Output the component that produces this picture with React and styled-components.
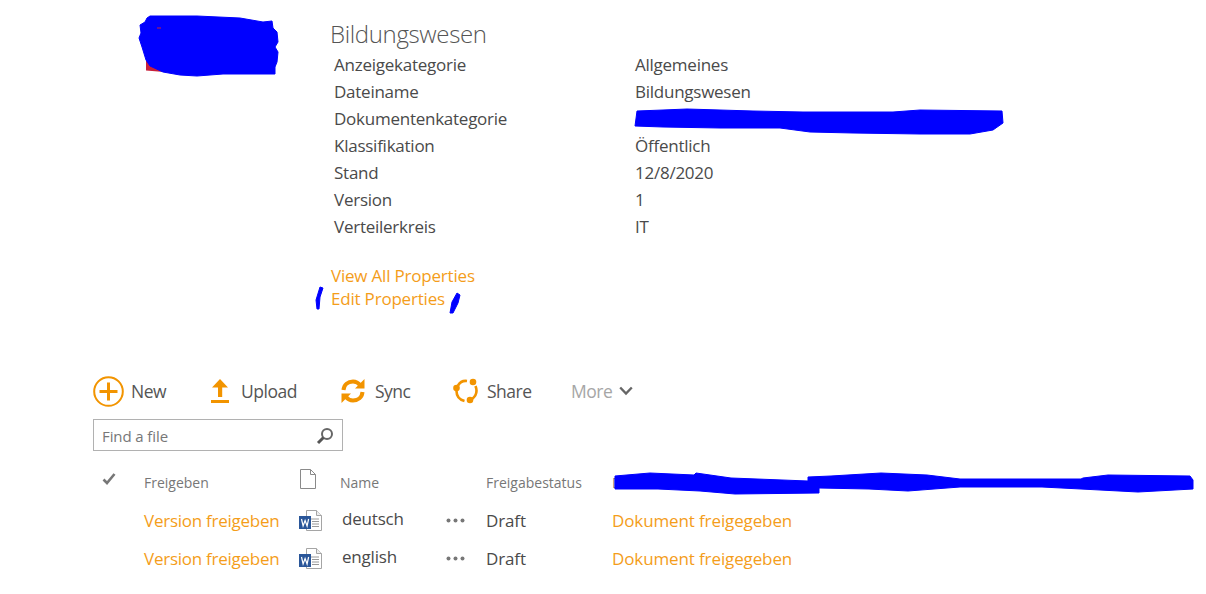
import React from "react";
import styled, { createGlobalStyle } from "styled-components";

const Global = createGlobalStyle`
  html, body { margin: 0; padding: 0; background: #fff; }
  body { font-family: "Open Sans", "Noto Sans", sans-serif; color: #4a4a4a; }
`;

const ORANGE = "#f49d1a";
const ICON = "#f29400";

const Page = styled.div`
  position: relative;
  width: 1206px;
  height: 594px;
  overflow: hidden;
  background: #fff;
`;

const Details = styled.section`
  display: flex;
  flex-direction: column;
  padding: 18px 0 0 331px;
`;
const Title = styled.h1`
  margin: 0 0 0 -1px;
  font-size: 24px;
  font-weight: 300;
  line-height: 32px;
  color: #555;
  letter-spacing: -0.35px;
`;
const PropList = styled.dl`
  margin: 1px 0 0 3px;
  display: grid;
  grid-template-columns: 301px 1fr;
  grid-auto-rows: 27px;
  align-items: center;
  font-size: 17px;
  letter-spacing: -0.25px;
`;
const PropName = styled.dt`
  color: #4a4a4a;
`;
const PropValue = styled.dd`
  margin: 0;
  color: #4a4a4a;
`;
const Links = styled.div`
  margin-top: 24px;
  display: flex;
  flex-direction: column;
  font-size: 17px;
  line-height: 23px;
  letter-spacing: -0.2px;
`;
const PropLink = styled.a`
  color: ${ORANGE};
`;

const Toolbar = styled.div`
  display: flex;
  align-items: center;
  height: 32px;
  margin: 65px 0 0 93px;
`;
const Action = styled.div`
  display: flex;
  align-items: center;
  width: ${(p) => p.$w}px;
  gap: ${(p) => p.$gap}px;
  font-size: 17.5px;
  letter-spacing: -0.5px;
  color: ${(p) => (p.$muted ? "#a6a6a6" : "#555")};
`;
const Search = styled.div`
  display: flex;
  align-items: center;
  justify-content: space-between;
  box-sizing: border-box;
  width: 250px;
  height: 32px;
  margin: 12px 0 0 93px;
  padding: 1px 8px 0;
  border: 1px solid #b1b1b1;
  font-size: 15px;
  letter-spacing: -0.1px;
  color: #777;
`;

const Table = styled.div`
  display: grid;
  grid-template-columns: 51px 156px 40px 146px 126px 1fr;
  margin: 12px 0 0 93px;
`;
const Head = styled.div`
  display: flex;
  align-items: center;
  height: 38px;
  font-size: 14px;
  color: #777;
`;
const CheckSlot = styled.span`
  display: flex;
  margin: -6px 0 0 9px;
`;
const FileSlot = styled.span`
  display: flex;
  margin-top: -6px;
`;
const Cell = styled.div`
  display: flex;
  align-items: center;
  height: 38px;
  font-size: 17px;
  letter-spacing: ${(p) => p.$ls ?? "-0.12px"};
  color: ${(p) => (p.$link ? ORANGE : "#4a4a4a")};
`;
const IconCell = styled(Cell)`
  margin-left: -1px;
`;
const NameCell = styled(Cell)`
  justify-content: space-between;
  padding: 0 21px 0 2px;
  letter-spacing: -0.2px;
`;
const NameText = styled.span`
  margin-top: -3px;
`;

const Redaction = styled.svg`
  position: absolute;
  left: 0;
  top: 0;
  pointer-events: none;
`;

const PlusIcon = () => (
  <svg width="31" height="31" viewBox="0 0 31 31" fill="none" stroke={ICON}>
    <circle cx="15.5" cy="15.5" r="14.3" strokeWidth="2" />
    <path d="M15.5 6.5v18M6.5 15.5h18" strokeWidth="3" />
  </svg>
);
const UploadIcon = () => (
  <svg width="20" height="24" viewBox="0 0 20 24" fill={ICON}>
    <path d="M10 0l8 8.5h-5.8V18H8V8.5H2z" />
    <rect x="1" y="21" width="18" height="3" />
  </svg>
);
const SyncIcon = () => (
  <svg width="24" height="26" viewBox="0 0 24 26" fill="none" stroke={ICON} strokeWidth="4">
    <path d="M2.5 12C3 6.5 7 3.5 12 3.5c3.5 0 5.5 1.5 7.5 4" />
    <path d="M21.5 14C21 19.5 17 22.5 12 22.5c-3.5 0-5.5-1.5-7.5-4" />
    <path d="M23.5 1v9.5h-9.5z" fill={ICON} stroke="none" />
    <path d="M.5 25v-9.5h9.5z" fill={ICON} stroke="none" />
  </svg>
);
const ShareIcon = () => (
  <svg width="26" height="26" viewBox="0 0 26 26" fill="none" stroke={ICON} strokeWidth="2.6">
    <path d="M5 7.5C7 4 10 2.5 14 3" />
    <path d="M22.5 8c2 5 1 9.5-3.5 13" />
    <path d="M3.5 13c0 5 2.5 8.5 8 10" />
    <circle cx="20" cy="4" r="3.3" fill={ICON} stroke="none" />
    <circle cx="3.5" cy="10" r="3.3" fill={ICON} stroke="none" />
    <circle cx="17" cy="22" r="3.3" fill={ICON} stroke="none" />
  </svg>
);
const Chevron = () => (
  <svg width="14" height="10" viewBox="0 0 14 10" fill="none" stroke="#666" strokeWidth="2.4">
    <path d="M1.2 1.5L7 7.5l5.8-6" />
  </svg>
);
const SearchIcon = () => (
  <svg width="18" height="18" viewBox="0 0 18 18" fill="none">
    <circle cx="11" cy="7" r="5" stroke="#666" strokeWidth="2" />
    <path d="M7.5 10.5L2 16" stroke="#555" strokeWidth="3" />
  </svg>
);
const CheckIcon = () => (
  <svg width="14" height="12" viewBox="0 0 14 12" fill="none" stroke="#777" strokeWidth="2.6">
    <path d="M1.5 6.5l3.5 3.5 7.5-9" />
  </svg>
);
const FileIcon = () => (
  <svg width="16" height="20" viewBox="0 0 16 20" fill="#fff" stroke="#8a8a8a" strokeWidth="1">
    <path d="M.5.5h10l5 5v14h-15z" />
    <path d="M10.5.5v5h5" fill="none" />
  </svg>
);
const WordIcon = () => (
  <svg width="23" height="21" viewBox="0 0 23 21">
    <path d="M7.5.5h10l5 5v15h-15z" fill="#fff" stroke="#a5a5a5" />
    <path d="M17.5.5v5h5" fill="#eee" stroke="#a5a5a5" />
    <path d="M11 9h9M13 11.5h7M13 14h7M13 16.5h7" stroke="#9a9a9a" />
    <rect x="0" y="6" width="12" height="13" fill="#2a5699" />
    <path d="M2.5 9l1.6 7 2-5.5 2 5.5 1.5-7" fill="none" stroke="#fff" strokeWidth="1.2" />
  </svg>
);
const Dots = () => (
  <svg width="19" height="5" viewBox="0 0 19 5" fill="#777">
    <circle cx="2.5" cy="2.5" r="2" />
    <circle cx="9.5" cy="2.5" r="2" />
    <circle cx="16.5" cy="2.5" r="2" />
  </svg>
);

const props = [
  ["Anzeigekategorie", "Allgemeines"],
  ["Dateiname", "Bildungswesen"],
  ["Dokumentenkategorie", ""],
  ["Klassifikation", "Öffentlich"],
  ["Stand", "12/8/2020"],
  ["Version", "1"],
  ["Verteilerkreis", "IT"],
];
const rows = ["deutsch", "english"];

export default function App() {
  return (
    <Page>
      <Global />
      <Details>
        <Title>Bildungswesen</Title>
        <PropList>
          {props.map(([k, v]) => (
            <React.Fragment key={k}>
              <PropName>{k}</PropName>
              <PropValue>{v}</PropValue>
            </React.Fragment>
          ))}
        </PropList>
        <Links>
          <PropLink>View All Properties</PropLink>
          <PropLink>Edit Properties</PropLink>
        </Links>
      </Details>

      <Toolbar>
        <Action $w={117} $gap={7}><PlusIcon />New</Action>
        <Action $w={131} $gap={11}><UploadIcon />Upload</Action>
        <Action $w={112} $gap={10}><SyncIcon />Sync</Action>
        <Action $w={118} $gap={8}><ShareIcon />Share</Action>
        <Action $w={80} $gap={7} $muted>More<Chevron /></Action>
      </Toolbar>
      <Search>
        Find a file
        <SearchIcon />
      </Search>

      <Table>
        <Head><CheckSlot><CheckIcon /></CheckSlot></Head>
        <Head>Freigeben</Head>
        <Head><FileSlot><FileIcon /></FileSlot></Head>
        <Head>Name</Head>
        <Head>Freigabestatus</Head>
        <Head>D</Head>
        {rows.map((name) => (
          <React.Fragment key={name}>
            <Cell />
            <Cell $link $ls="-0.25px">Version freigeben</Cell>
            <IconCell><WordIcon /></IconCell>
            <NameCell><NameText>{name}</NameText><Dots /></NameCell>
            <Cell>Draft</Cell>
            <Cell $link>Dokument freigegeben</Cell>
          </React.Fragment>
        ))}
      </Table>

      <Redaction width="1206" height="594" viewBox="0 0 1206 594">
        <path fill="#c8203a" d="M146 60V70.5L164 72z" />
        <g fill="#0000ff" stroke="#0000ff" strokeWidth="1" strokeLinejoin="round">
          <path d="M147 18L150 16 197 16 240 18 263 22 272 21 273 28 277 32 278 42 275 47 278 52 277 62 275 67 275 74 223 74 197 76 180 75 163 72 150 66 146 60 142 47 139 38 141 33 140 25 145 22z" />
          <path d="M637 111L663 110 687 109 753 111 803 112 863 112 893 112 920 110 1002 111 1003 123 993 130 970 134 920 134 853 133 810 132 780 128 720 128 663 127 635 126z" />
          <path d="M615 476L650 473 694 475 696 473 731 478 808 481 808 477 831 476 881 473 927 475 960 479 1081 479 1083 478 1108 475 1190 476 1193 480 1193 489 1138 492 1081 489 1042 487 960 487 908 491 869 489 819 488 819 493 735 494 700 491 658 489 615 489z" />
          <path d="M320 287L323 288 320 297 319 309 317 309 316 300z" />
          <path d="M457 293L460 295 458 303 453 313 450 313 452 302z" />
        </g>
        <path fill="#c8203a" d="M157 27.500h4v1h-4z" />
      </Redaction>
    </Page>
  );
}
